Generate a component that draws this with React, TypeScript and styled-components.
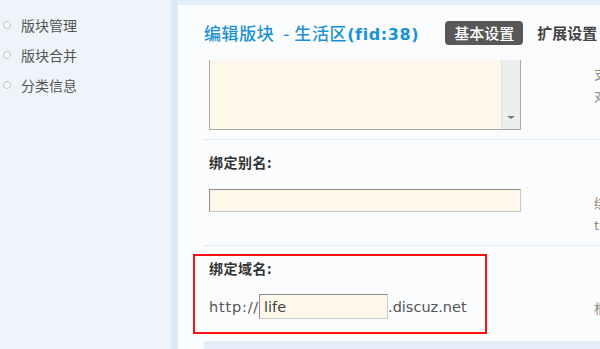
import * as React from 'react';
import styled, { createGlobalStyle } from 'styled-components';

const GlobalStyle = createGlobalStyle`
  html, body {
    margin: 0;
    padding: 0;
    width: 600px;
    height: 349px;
    overflow: hidden;
    background: #fbfcfe;
  }
  body {
    font-family: "DejaVu Sans", "Noto Sans CJK SC", sans-serif;
    color: #555;
  }
`;

const cjk = `"Noto Sans CJK SC", "DejaVu Sans", sans-serif`;

const Layout = styled.div`
  display: flex;
  width: 600px;
  height: 349px;
  overflow: hidden;
`;

const Sidebar = styled.ul`
  width: 178px;
  flex: none;
  margin: 0;
  padding: 10px 0 0 3px;
  list-style: none;
  background: #eef4fa;
  border-right: 7px solid #dbe9f5;
  box-sizing: border-box;
`;

const MenuItem = styled.li`
  display: flex;
  align-items: center;
  gap: 10px;
  height: 30px;
  font-family: ${cjk};
  font-size: 14px;
  color: #555;
`;

const Bullet = styled.span`
  width: 6px;
  height: 6px;
  border-radius: 50%;
  border: 1px solid #c4c4c4;
  background: #fafafa;
`;

const Main = styled.div`
  flex: 1;
  display: flex;
  flex-direction: column;
  min-width: 0;
  overflow: hidden;
`;

const TopStrip = styled.div`
  flex: none;
  height: 5px;
  background: #e5eff8;
`;

const Header = styled.div`
  flex: none;
  display: flex;
  align-items: center;
  height: 55px;
  padding-left: 26px;
  white-space: nowrap;
`;

const Title = styled.h1`
  margin: 0;
  font-family: ${cjk};
  font-size: 17px;
  font-weight: 500;
  letter-spacing: 0.6px;
  color: #1b92d1;
`;

const TitleId = styled.span`
  font-family: "DejaVu Sans", sans-serif;
  font-size: 16px;
  font-weight: bold;
`;

const Tab = styled.span<{ $active?: boolean }>`
  flex: none;
  display: inline-flex;
  align-items: center;
  height: 24px;
  padding: 0 9px;
  margin-left: ${(p) => (p.$active ? '26px' : '5px')};
  border-radius: 4px;
  font-family: ${cjk};
  font-size: 15px;
  font-weight: ${(p) => (p.$active ? 500 : 'bold')};
  background: ${(p) => (p.$active ? '#585858' : 'transparent')};
  color: ${(p) => (p.$active ? '#fff' : '#444')};
`;

const Content = styled.div`
  flex: 1;
  min-height: 0;
  padding-left: 26px;
  display: flex;
  flex-direction: column;
`;

const Setting = styled.div<{ $highlight?: boolean; $pt: number; $pb: number }>`
  flex: none;
  padding: ${(p) => `${p.$pt}px 0 ${p.$pb}px ${p.$highlight ? 14 : 5}px`};
  margin-left: ${(p) => (p.$highlight ? '-11px' : '0')};
  margin-top: ${(p) => (p.$highlight ? '8px' : '0')};
  width: ${(p) => (p.$highlight ? '294px' : 'auto')};
  box-sizing: border-box;
  border: ${(p) => (p.$highlight ? '2px solid #ff1010' : 'none')};
  border-bottom: ${(p) => (p.$highlight ? '2px solid #ff1010' : '1px dotted #cddff0')};
`;

const Label = styled.div<{ $gap: number }>`
  height: 20px;
  line-height: 20px;
  margin-bottom: ${(p) => p.$gap}px;
  font-family: ${cjk};
  font-size: 14px;
  font-weight: bold;
  letter-spacing: 0.5px;
  color: #333;
`;

const FieldRow = styled.div`
  display: flex;
  align-items: flex-start;
  gap: 73px;
`;

const Field = styled.div`
  width: 312px;
  flex: none;
  display: flex;
  align-items: center;
  font-size: 14.5px;
  color: #555;
  white-space: nowrap;
`;

const Prefix = styled.span`
  letter-spacing: 0.8px;
`;

const Tip = styled.div`
  flex: none;
  padding-top: 3px;
  font-family: ${cjk};
  font-size: 13px;
  line-height: 22px;
  color: #8a8a8a;
  white-space: nowrap;
`;

const TextBox = styled.div`
  flex: none;
  display: flex;
  width: 312px;
  height: 70px;
  box-sizing: border-box;
  border: 1px solid #a9a9a9;
  border-top: none;
  background: #fdf8ea;
`;

const TextFill = styled.div`
  flex: 1;
`;

const ScrollTrack = styled.div`
  width: 19px;
  display: flex;
  flex-direction: column;
  justify-content: flex-end;
  align-items: center;
  padding-bottom: 10px;
  box-sizing: border-box;
  background: #eeeeee;
  border-left: 1px solid #e2e2e2;
`;

const Arrow = styled.span`
  width: 0;
  height: 0;
  border-left: 4px solid transparent;
  border-right: 4px solid transparent;
  border-top: 3px solid #777;
`;

const Input = styled.div<{ $width: number; $height: number }>`
  flex: none;
  width: ${(p) => p.$width}px;
  height: ${(p) => p.$height}px;
  box-sizing: border-box;
  padding-left: 4px;
  display: flex;
  align-items: center;
  background: #fdf8ea;
  border: 1px solid #c8c8c8;
  border-top-color: #8d8d8d;
  border-left-color: #8d8d8d;
  font-size: 14.5px;
  color: #444;
`;

const FooterStrip = styled.div`
  flex: none;
  margin-top: 7px;
  height: 10px;
  background: #e3eef8;
`;

const menu = ['版块管理', '版块合并', '分类信息'];

export default function App() {
  return (
    <>
      <GlobalStyle />
      <Layout>
        <Sidebar>
          {menu.map((m) => (
            <MenuItem key={m}>
              <Bullet />
              {m}
            </MenuItem>
          ))}
        </Sidebar>
        <Main>
          <TopStrip />
          <Header>
            <Title>
              编辑版块 &nbsp;- 生活区<TitleId>(fid:38)</TitleId>
            </Title>
            <Tab $active>基本设置</Tab>
            <Tab>扩展设置</Tab>
          </Header>
          <Content>
            <Setting $pt={0} $pb={9}>
              <FieldRow>
                <TextBox>
                  <TextFill />
                  <ScrollTrack>
                    <Arrow />
                  </ScrollTrack>
                </TextBox>
                <Tip>
                  支持 Discuz! 代码
                  <br />
                  对版块进行说明
                </Tip>
              </FieldRow>
            </Setting>
            <Setting $pt={12} $pb={9}>
              <Label $gap={17}>绑定别名:</Label>
              <FieldRow>
                <Input $width={312} $height={23} />
                <Tip>
                  绑定别名后可通过
                  <br />
                  tieba 访问
                </Tip>
              </FieldRow>
            </Setting>
            <Setting $highlight $pt={2} $pb={13}>
              <Label $gap={16}>绑定域名:</Label>
              <FieldRow>
                <Field>
                  <Prefix>http://</Prefix>
                  <Input $width={129} $height={25}>
                    life
                  </Input>
                  .discuz.net
                </Field>
                <Tip>根据设置访问</Tip>
              </FieldRow>
            </Setting>
            <FooterStrip />
          </Content>
        </Main>
      </Layout>
    </>
  );
}
